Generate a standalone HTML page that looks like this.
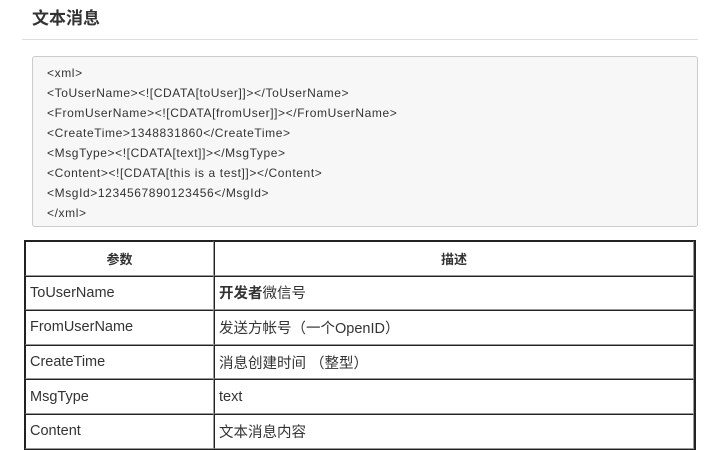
<!DOCTYPE html>
<html><head><meta charset="utf-8"><style>
body{margin:0;width:713px;height:425px;overflow:hidden;background:#fff;font-family:"Liberation Sans","Noto Sans CJK SC",sans-serif;color:#222;position:relative}
h2{position:absolute;left:32px;top:7px;margin:0;font-size:17px;font-weight:bold;color:#333;line-height:24px}
.hr{position:absolute;left:22px;top:39px;width:676px;height:1px;background:#ddd}
.code{position:absolute;left:32px;top:56px;width:666px;height:171px;background:#f7f7f7;border:1px solid #ccc;border-radius:3px;box-sizing:border-box;padding:6px 0 0 14px;font-size:12px;line-height:20px;color:#333;letter-spacing:0.6px}
table{position:absolute;left:24px;top:240px;width:672px;border-collapse:separate;border-spacing:0;border:1px solid #222;border-right:2px solid #222}
td,th{border:1px solid #222;border-color:#222 #999 #999 #222;height:32.5px;box-sizing:border-box;font-size:14.5px;padding:0 0 0 4px;text-align:left;color:#333}
tr{height:34.6px}
th{text-align:center;font-size:13px;font-weight:bold;padding:0}
td:first-child{width:185px}
</style></head><body>
<h2>文本消息</h2>
<div class="hr"></div>
<div class="code">&lt;xml&gt;<br>&lt;ToUserName&gt;&lt;![CDATA[toUser]]&gt;&lt;/ToUserName&gt;<br>&lt;FromUserName&gt;&lt;![CDATA[fromUser]]&gt;&lt;/FromUserName&gt;<br>&lt;CreateTime&gt;1348831860&lt;/CreateTime&gt;<br>&lt;MsgType&gt;&lt;![CDATA[text]]&gt;&lt;/MsgType&gt;<br>&lt;Content&gt;&lt;![CDATA[this is a test]]&gt;&lt;/Content&gt;<br>&lt;MsgId&gt;1234567890123456&lt;/MsgId&gt;<br>&lt;/xml&gt;</div>
<table>
<tr><th style="width:189px">参数</th><th>描述</th></tr>
<tr><td>ToUserName</td><td><b>开发者</b>微信号</td></tr>
<tr><td>FromUserName</td><td>发送方帐号（一个OpenID）</td></tr>
<tr><td>CreateTime</td><td>消息创建时间 （整型）</td></tr>
<tr><td>MsgType</td><td>text</td></tr>
<tr><td>Content</td><td>文本消息内容</td></tr>
</table>
</body></html>
